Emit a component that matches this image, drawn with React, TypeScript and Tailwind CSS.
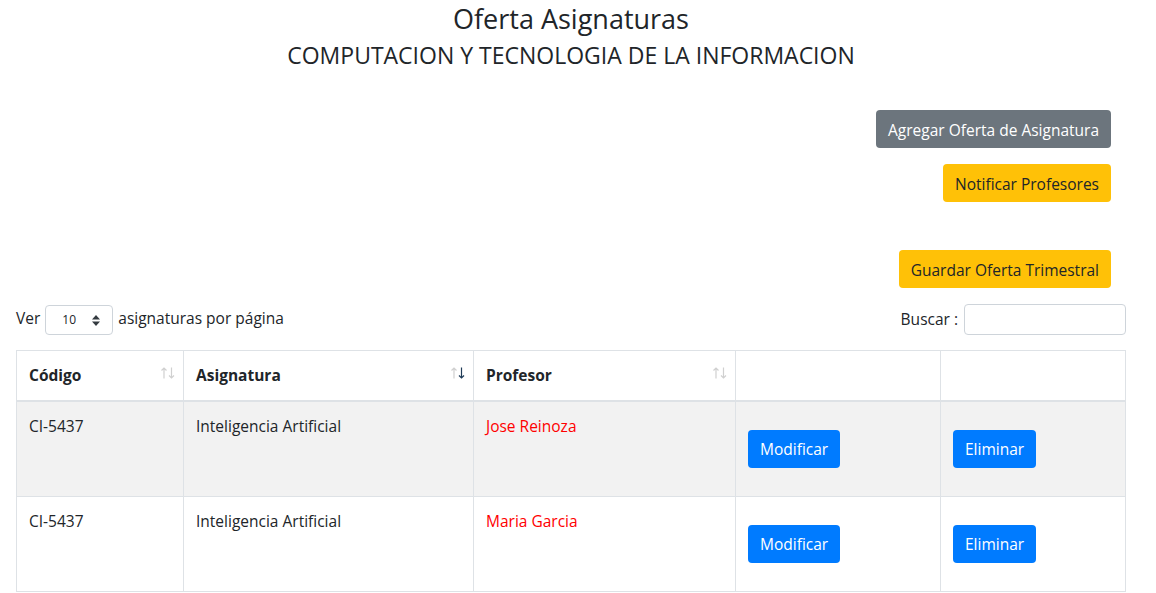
const rows = [
  { code: 'CI-5437', name: 'Inteligencia Artificial', prof: 'Jose Reinoza' },
  { code: 'CI-5437', name: 'Inteligencia Artificial', prof: 'Maria Garcia' },
];

function SortIcon({ active }: { active?: 'down' | 'up' }) {
  const up = active === 'up' ? '#1f3b57' : '#d0d0d0';
  const down = active === 'down' ? '#1f3b57' : '#d0d0d0';
  return (
    <svg className="absolute right-[8px] top-[16px]" width="14" height="12" viewBox="0 0 14 12" fill="none" strokeWidth="1.2">
      <path d="M3 11.5 V1 M0.5 3.5 L3 1 L5.5 3.5" stroke={up} />
      <path d="M10.5 0.5 V11 M8 8.5 L10.5 11 L13 8.5" stroke={down} />
    </svg>
  );
}

function SelectCaret() {
  return (
    <svg className="absolute right-[12px] top-[9px]" width="8" height="11" viewBox="0 0 8 11">
      <path d="M4 0 L8 4.5 H0 Z" fill="#343a40" />
      <path d="M4 11 L8 6.5 H0 Z" fill="#343a40" />
    </svg>
  );
}

export default function App() {
  return (
    <div className="min-h-[593px] bg-white pl-4 pr-[30px] text-[15.5px] text-[#212529] font-['Open_Sans',sans-serif]">
      {/* Header */}
      <div className="pt-[2px] text-center">
        <h3 className="text-[27px] leading-[34px]">Oferta Asignaturas</h3>
        <h4 className="mt-[4px] text-[23px] leading-[30px]">COMPUTACION Y TECNOLOGIA DE LA INFORMACION</h4>
      </div>

      {/* Actions */}
      <div className="mt-[40px] flex flex-col items-end pr-[15px]">
        <button className="h-[38px] rounded px-3 pt-[3px] bg-[#6c757d] text-white">Agregar Oferta de Asignatura</button>
        <button className="mt-4 h-[38px] rounded px-3 pt-[3px] bg-[#ffc107] text-[#212529]">Notificar Profesores</button>
        <button className="mt-12 h-[38px] rounded px-3 pt-[3px] bg-[#ffc107] text-[#212529]">Guardar Oferta Trimestral</button>
      </div>

      {/* Table controls */}
      <div className="mt-4 flex items-center justify-between">
        <label className="flex items-center leading-6 -mt-[3px]">
          Ver
          <span className="relative mx-[5px] mt-[3px] flex h-[30px] w-[68px] items-center rounded border border-[#ced4da] pl-4 text-[12px]">
            10
            <SelectCaret />
          </span>
          asignaturas por página
        </label>
        <label className="flex items-center">
          Buscar :
          <span className="ml-[6px] h-[31px] w-[162px] rounded border border-[#ced4da]" />
        </label>
      </div>

      {/* Table */}
      <table className="mt-[15px] w-full border-collapse border border-[#dee2e6]">
        <thead>
          <tr className="h-[50px] border-b-2 border-[#dee2e6] text-left">
            <th className="relative w-[167px] border border-[#dee2e6] px-3 font-bold">Código<SortIcon /></th>
            <th className="relative w-[290px] border border-[#dee2e6] px-3 font-bold">Asignatura<SortIcon active="down" /></th>
            <th className="relative w-[262px] border border-[#dee2e6] px-3 font-bold">Profesor<SortIcon /></th>
            <th className="w-[205px] border border-[#dee2e6]" />
            <th className="border border-[#dee2e6]" />
          </tr>
        </thead>
        <tbody>
          {rows.map((r, i) => (
            <tr key={i} className={i % 2 === 0 ? 'bg-[#f2f2f2]' : 'bg-white'}>
              <td className="border border-[#dee2e6] p-3 align-top leading-6">{r.code}</td>
              <td className="border border-[#dee2e6] p-3 align-top leading-6">{r.name}</td>
              <td className="border border-[#dee2e6] p-3 align-top leading-6 text-[#ff0000]">{r.prof}</td>
              <td className="border border-[#dee2e6] p-3 align-top">
                <button className="my-4 h-[38px] rounded px-3 pt-[2px] bg-[#007bff] text-white">Modificar</button>
              </td>
              <td className="border border-[#dee2e6] p-3 align-top">
                <button className="my-4 h-[38px] rounded px-3 pt-[2px] bg-[#007bff] text-white">Eliminar</button>
              </td>
            </tr>
          ))}
        </tbody>
      </table>
    </div>
  );
}
